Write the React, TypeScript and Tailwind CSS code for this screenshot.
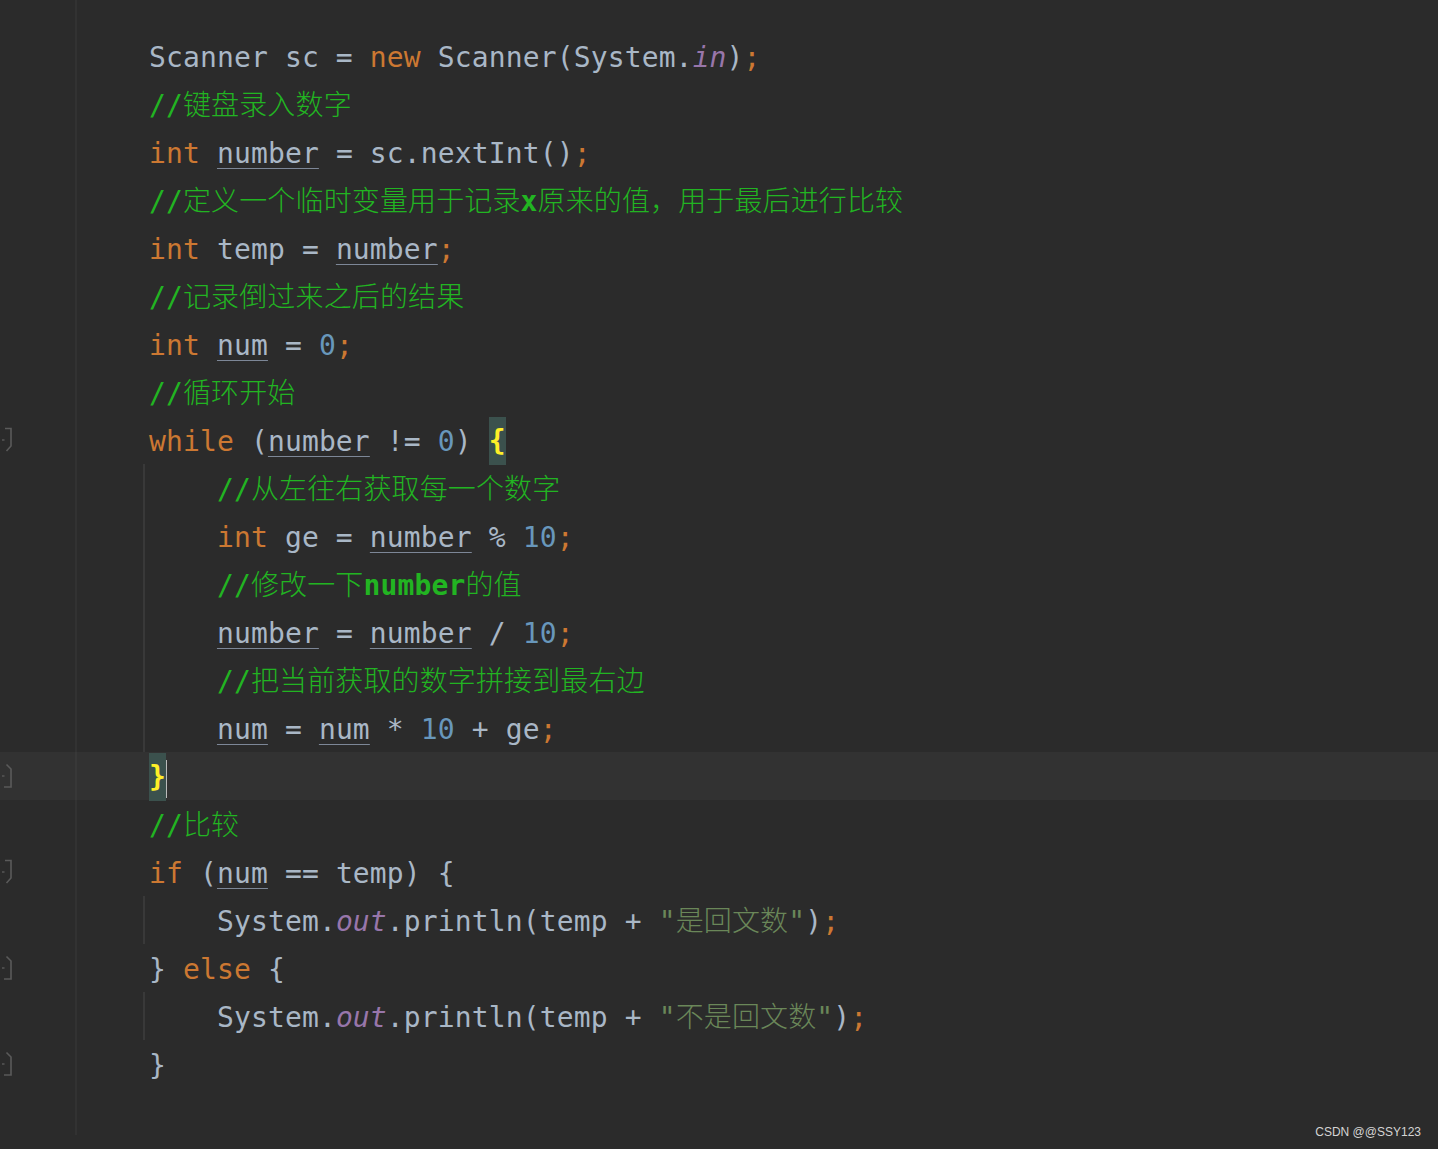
import React from "react";

const MONO = '"DejaVu Sans Mono", "Noto Sans CJK SC", monospace';

const K = ({ children }: { children: React.ReactNode }) => (
  <span className="text-[#cc7832]">{children}</span>
);
const N = ({ children }: { children: React.ReactNode }) => (
  <span className="text-[#6897bb]">{children}</span>
);
const C = ({ children }: { children: React.ReactNode }) => (
  <span className="text-[#22b422] font-light">{children}</span>
);
const Cb = ({ children }: { children: React.ReactNode }) => (
  <span className="text-[#22b422] font-bold">{children}</span>
);
const S = ({ children }: { children: React.ReactNode }) => (
  <span className="text-[#6a8759] font-light">{children}</span>
);
const U = ({ children }: { children: React.ReactNode }) => (
  <span className="underline decoration-[#7d8797] decoration-1 underline-offset-[5px]">{children}</span>
);
const F = ({ children }: { children: React.ReactNode }) => (
  <span className="text-[#9876aa] italic">{children}</span>
);
const B = ({ children }: { children: React.ReactNode }) => (
  <span className="relative -top-[1px] inline-block h-12 bg-[#3b514d] text-[#ffef28] font-bold">{children}</span>
);

type Fold = "start" | "end" | null;

const FoldMark = ({ kind }: { kind: Fold }) => {
  if (!kind) return null;
  return (
    <svg width="14" height="26" viewBox="0 0 14 26">
      {kind === "start" ? (
        <path d="M5 1.5 H11 V19 L6.5 24" stroke="#5a5a5a" strokeWidth="1.6" fill="none" />
      ) : (
        <path d="M6.5 1.5 L11 6 V24 H4" stroke="#5a5a5a" strokeWidth="1.6" fill="none" />
      )}
      <path d="M2 13 H4.5" stroke="#5a5a5a" strokeWidth="1.4" />
    </svg>
  );
};

type Line = {
  content: React.ReactNode;
  indent?: boolean;
  guide?: boolean;
  fold?: Fold;
  current?: boolean;
};

const lines: Line[] = [
  {
    content: (
      <>
        Scanner sc = <K>new</K> Scanner(System.<F>in</F>)<K>;</K>
      </>
    ),
  },
  { content: <C>//键盘录入数字</C> },
  {
    content: (
      <>
        <K>int</K> <U>number</U> = sc.nextInt()<K>;</K>
      </>
    ),
  },
  {
    content: (
      <>
        <C>//定义一个临时变量用于记录</C>
        <Cb>x</Cb>
        <C>原来的值，用于最后进行比较</C>
      </>
    ),
  },
  {
    content: (
      <>
        <K>int</K> temp = <U>number</U>
        <K>;</K>
      </>
    ),
  },
  { content: <C>//记录倒过来之后的结果</C> },
  {
    content: (
      <>
        <K>int</K> <U>num</U> = <N>0</N>
        <K>;</K>
      </>
    ),
  },
  { content: <C>//循环开始</C> },
  {
    content: (
      <>
        <K>while</K> (<U>number</U> != <N>0</N>) <B>{"{"}</B>
      </>
    ),
    fold: "start",
  },
  { content: <C>//从左往右获取每一个数字</C>, indent: true, guide: true },
  {
    content: (
      <>
        <K>int</K> ge = <U>number</U> % <N>10</N>
        <K>;</K>
      </>
    ),
    indent: true,
    guide: true,
  },
  {
    content: (
      <>
        <C>//修改一下</C>
        <Cb>number</Cb>
        <C>的值</C>
      </>
    ),
    indent: true,
    guide: true,
  },
  {
    content: (
      <>
        <U>number</U> = <U>number</U> / <N>10</N>
        <K>;</K>
      </>
    ),
    indent: true,
    guide: true,
  },
  { content: <C>//把当前获取的数字拼接到最右边</C>, indent: true, guide: true },
  {
    content: (
      <>
        <U>num</U> = <U>num</U> * <N>10</N> + ge<K>;</K>
      </>
    ),
    indent: true,
    guide: true,
  },
  {
    content: (
      <>
        <B>{"}"}</B>
        <span className="inline-block w-[3px] h-[38px] bg-[#bbbbbb] align-middle -ml-[2px]" />
      </>
    ),
    fold: "end",
    current: true,
  },
  { content: <C>//比较</C> },
  {
    content: (
      <>
        <K>if</K> (<U>num</U> == temp) {"{"}
      </>
    ),
    fold: "start",
  },
  {
    content: (
      <>
        System.<F>out</F>.println(temp + <S>"是回文数"</S>)<K>;</K>
      </>
    ),
    indent: true,
    guide: true,
  },
  {
    content: (
      <>
        {"} "}
        <K>else</K> {"{"}
      </>
    ),
    fold: "end",
  },
  {
    content: (
      <>
        System.<F>out</F>.println(temp + <S>"不是回文数"</S>)<K>;</K>
      </>
    ),
    indent: true,
    guide: true,
  },
  { content: <>{"}"}</>, fold: "end" },
];

export default function App() {
  return (
    <div
      className="relative w-[1438px] h-[1149px] overflow-hidden bg-[#2b2b2b] text-[#a9b7c6] flex flex-col"
      style={{ fontFamily: MONO }}
    >
      <div className="flex h-8 shrink-0">
        <div className="w-[75px]" />
        <div className="w-[2px] bg-[#323232]" />
      </div>

      {lines.map((l, i) => (
        <div
          key={i}
          className={`flex h-12 shrink-0 ${l.current ? "bg-[#323232]" : ""}`}
        >
          <div className="w-[75px] flex items-center">
            <FoldMark kind={l.fold ?? null} />
          </div>
          <div className={`w-[2px] ${l.current ? "bg-[#383838]" : "bg-[#323232]"}`} />
          <div className="w-[66px]" />
          <div className={`w-[2px] ${l.guide ? "bg-[#393939]" : ""}`} />
          <div className="pl-[4px] pt-[2px] text-[28px] leading-[48px] tracking-[0.13px] whitespace-pre">
            {l.indent ? "    " : ""}
            {l.content}
          </div>
        </div>
      ))}

      <div className="flex h-[47px] shrink-0">
        <div className="w-[75px]" />
        <div className="w-[2px] bg-[#323232]" />
      </div>

      <div
        className="absolute right-[17px] bottom-[8px] text-[12px] text-[#d4d4d4]"
        style={{ fontFamily: '"Liberation Sans", Arial, sans-serif' }}
      >
        CSDN @@SSY123
      </div>
    </div>
  );
}
